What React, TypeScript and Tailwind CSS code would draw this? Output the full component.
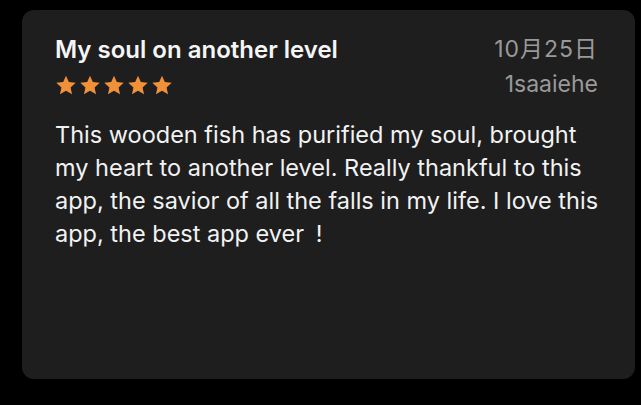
import React from "react";

const Star = () => (
  <svg viewBox="0 0 24 24" className="h-[22px] w-[22px]" fill="#f0913a">
    <path d="M12 1.8l3.1 6.9 7.5.8-5.6 5.1 1.6 7.4L12 18.2 5.4 22l1.6-7.4L1.4 9.5l7.5-.8z" />
  </svg>
);

export default function App() {
  return (
    <div className="h-[405px] w-[641px] bg-black pt-[10px] pl-[22px]" style={{ fontFamily: "Inter, 'Noto Sans CJK SC', sans-serif" }}>
      <div className="flex h-[369px] w-[613px] flex-col rounded-[12px] bg-[#1e1e1e] pt-[26px] pr-[37px] pl-[33px]">
        <div className="flex justify-between">
          <div className="flex flex-col">
            <h1 className="text-[24px] leading-[28px] font-semibold text-[#f5f5f5]">My soul on another level</h1>
            <div className="mt-[10px] flex gap-[2px]">
              <Star />
              <Star />
              <Star />
              <Star />
              <Star />
            </div>
          </div>
          <div className="-mt-[4px] flex flex-col items-end text-[23px] leading-[35px] text-[#999999]">
            <span className="tracking-[1px]">10月25日</span>
            <span>1saaiehe</span>
          </div>
        </div>
        <p className="mt-[16px] -mr-[10px] text-[23.5px] leading-[33px] text-[#f2f2f2]">
          This wooden fish has purified my soul, brought my heart to another level. Really thankful to this app, the savior of all the falls in my life. I love this app, the best app ever <span className="ml-[5px]">!</span>
        </p>
      </div>
    </div>
  );
}
